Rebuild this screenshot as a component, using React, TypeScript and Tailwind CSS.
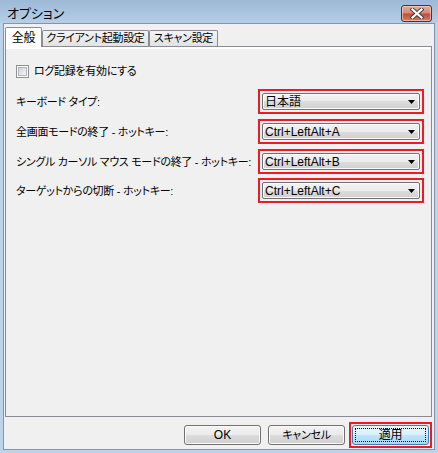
import React from "react";

const btn =
  "w-[77px] h-[20px] rounded-[3px] border border-[#707070] bg-[linear-gradient(#f2f2f2_0%,#ebebeb_50%,#dddddd_50%,#cfcfcf_100%)] shadow-[inset_0_0_0_1px_#fcfcfc] flex items-center justify-center leading-none whitespace-nowrap";

function Select({ value }: { value: string }) {
  return (
    <div className="shrink-0 w-[166px] h-[25px] border-2 border-[#ed1c24] p-[2px]">
      <div className="relative w-full h-full rounded-[2px] border border-[#707070] bg-[linear-gradient(#f2f2f2_0%,#ebebeb_50%,#dddddd_50%,#cfcfcf_100%)] shadow-[inset_0_0_0_1px_#fcfcfc] flex items-center pl-[2px] leading-none text-[12px] tracking-normal">
        <span>{value}</span>
        <svg className="absolute right-[4px] top-[6px]" width="7" height="4" viewBox="0 0 7 4">
          <polygon points="0,0 7,0 3.5,4" fill="#000" />
        </svg>
      </div>
    </div>
  );
}

function Row({ label, value, mt }: { label: string; value: string; mt: string }) {
  return (
    <div className={`flex items-center justify-between ${mt}`}>
      <span className="leading-none whitespace-nowrap mt-[1px]">{label}</span>
      <Select value={value} />
    </div>
  );
}

export default function App() {
  return (
    <div className="w-[438px] h-[453px] flex flex-col bg-[#bcd3ea] font-['Liberation_Sans','Noto_Sans_CJK_JP',sans-serif] text-[11px] tracking-[-0.3px] text-black [font-feature-settings:'palt'] overflow-hidden">
      {/* title bar */}
      <div className="h-[23px] flex items-start pl-[7px] pr-[6px] bg-[linear-gradient(#9db9d6,#b6cee7)]">
        <span className="mt-[7px] text-[13px] leading-none tracking-normal">オプション</span>
        <div className="ml-auto mt-[5px] w-[31px] h-[17px] rounded-[3px] border border-[#5c2b24] bg-[linear-gradient(#e9a99a_0%,#d88a79_45%,#c24c3c_55%,#d0806c_100%)] shadow-[inset_0_0_0_1px_rgba(255,220,210,0.6)] flex items-center justify-center">
          <svg width="14" height="11" viewBox="0 0 14 11">
            <path d="M2.5 1.5 L11.5 9.5 M11.5 1.5 L2.5 9.5" stroke="#4a3a3a" strokeWidth="4" strokeLinecap="square" />
            <path d="M2.5 1.5 L11.5 9.5 M11.5 1.5 L2.5 9.5" stroke="#ffffff" strokeWidth="2.2" strokeLinecap="square" />
          </svg>
        </div>
      </div>

      {/* client */}
      <div className="mx-[3px] mb-[3px] flex-1 border border-[#8196ad] bg-[#f0f0f0] flex flex-col">
        {/* tabs */}
        <div className="h-[22px] pt-[3px] pl-[1px] flex items-end">
          <div className="relative z-10 -mb-px w-[37px] h-[20px] rounded-t-[2px] border border-b-0 border-[#898c95] bg-white flex justify-center pt-[4px] leading-none text-[12px] whitespace-nowrap">
            全般
          </div>
          <div className="w-[107px] h-[16px] rounded-t-[2px] border border-b-0 border-[#898c95] bg-[linear-gradient(#f3f3f3,#e3e3e3)] flex justify-center pt-[2px] leading-none whitespace-nowrap">
            クライアント起動設定
          </div>
          <div className="w-[69px] h-[16px] rounded-t-[2px] border border-b-0 border-[#898c95] bg-[linear-gradient(#f3f3f3,#e3e3e3)] flex justify-center pt-[2px] leading-none whitespace-nowrap">
            スキャン設定
          </div>
        </div>

        {/* panel */}
        <div className="ml-[1px] w-[427px] h-[371px] border border-[#898c95] bg-[#f0f0f0] shadow-[inset_0_2px_0_#ffffff] pt-[18px] pl-[10px] pr-[7px] flex flex-col">
          <div className="flex items-center h-[13px]">
            <div className="w-[13px] h-[13px] border border-[#8e8f8f] bg-white p-[1px]">
              <div className="w-full h-full border border-[#b0b4ba] bg-[linear-gradient(135deg,#cfd2d6,#f6f6f6)]" />
            </div>
            <span className="ml-[5px] leading-none whitespace-nowrap">ログ記録を有効にする</span>
          </div>
          <Row mt="mt-[11px]" label="キーボード タイプ:" value="日本語" />
          <Row mt="mt-[5px]" label="全画面モードの終了 - ホットキー:" value="Ctrl+LeftAlt+A" />
          <Row mt="mt-[5px]" label="シングル カーソル マウス モードの終了 - ホットキー:" value="Ctrl+LeftAlt+B" />
          <Row mt="mt-[4px]" label="ターゲットからの切断 - ホットキー:" value="Ctrl+LeftAlt+C" />
        </div>

        {/* buttons */}
        <div className="mt-[5px] h-[26px] flex items-center justify-end pr-[2px]">
          <div className={`${btn} text-[12px] tracking-normal`}>OK</div>
          <div className={`${btn} ml-[7px]`}>キャンセル</div>
          <div className="ml-[4px] w-[83px] h-[26px] border-2 border-[#ed1c24] p-[1px]">
            <div className="relative w-[77px] h-[20px] rounded-[3px] border border-[#3c7fb1] bg-[linear-gradient(#eaf6fd_0%,#d9f0fc_50%,#bee6fd_50%,#a7d9f5_100%)] flex items-center justify-center leading-none text-[12px]">
              <div className="absolute inset-[2px] border border-dotted border-black" />
              適用
            </div>
          </div>
        </div>
      </div>
    </div>
  );
}
